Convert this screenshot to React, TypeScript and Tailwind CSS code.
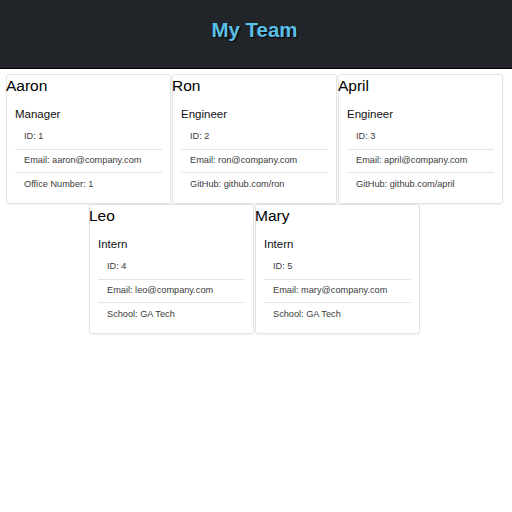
import React from "react";

type Emp = { name: string; role: string; id: number; email: string; extra: string };

const team: Emp[] = [
  { name: "Aaron", role: "Manager", id: 1, email: "aaron@company.com", extra: "Office Number: 1" },
  { name: "Ron", role: "Engineer", id: 2, email: "ron@company.com", extra: "GitHub: github.com/ron" },
  { name: "April", role: "Engineer", id: 3, email: "april@company.com", extra: "GitHub: github.com/april" },
  { name: "Leo", role: "Intern", id: 4, email: "leo@company.com", extra: "School: GA Tech" },
  { name: "Mary", role: "Intern", id: 5, email: "mary@company.com", extra: "School: GA Tech" },
];

function Card({ e }: { e: Emp }) {
  return (
    <div className="w-[165px] h-[130px] border border-[#e3e3e3] rounded-[3px] shadow-[0_1px_2px_rgba(0,0,0,0.06)] bg-white flex flex-col">
      <div className="text-[15.5px] leading-[20px] text-black mt-[1px] -ml-[1px]">{e.name}</div>
      <div className="px-[8px] pt-[10px]">
        <div className="text-[11.5px] leading-[16px] text-[#111]">{e.role}</div>
        <ul className="mt-[4px] text-[9.2px] text-[#3a3a3a]">
          <li className="h-[23.5px] flex items-center px-[9px] border-b border-[#e5e5e5]">ID: {e.id}</li>
          <li className="h-[23.5px] flex items-center px-[9px] border-b border-[#e5e5e5]">Email: {e.email}</li>
          <li className="h-[23.5px] flex items-center px-[9px]">{e.extra}</li>
        </ul>
      </div>
    </div>
  );
}

export default function App() {
  return (
    <div className="w-[512px] h-[512px] bg-white" style={{ fontFamily: '"Liberation Sans", Arial, sans-serif' }}>
      <header className="h-[69px] bg-[#212529] border-b border-black flex items-center justify-center">
        <h1 className="text-[20.5px] font-bold text-[#5bc0e8] -mt-[8px] ml-[-3px] [text-shadow:1px_1px_1px_#000]">My Team</h1>
      </header>
      <div className="flex flex-wrap justify-center gap-x-[1px] pt-[5px] pr-[3px]">
        {team.map((e) => (
          <Card key={e.id} e={e} />
        ))}
      </div>
    </div>
  );
}
